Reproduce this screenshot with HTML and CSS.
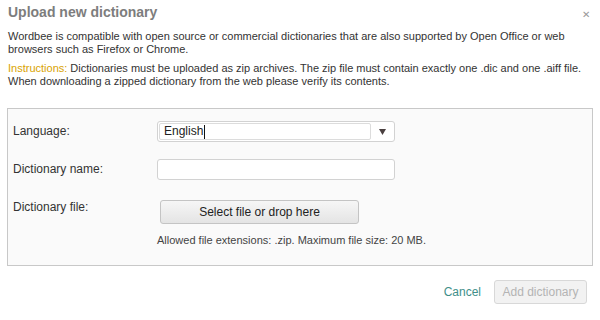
FILE: index.html
```html
<!DOCTYPE html>
<html>
<head>
<meta charset="utf-8">
<link rel="stylesheet" href="styles.css">
</head>
<body>
<div class="dialog">
  <div class="header">
    <h1 class="title">Upload new dictionary</h1>
    <span class="close">&#x2715;</span>
  </div>
  <p class="intro">Wordbee is compatible with open source or commercial dictionaries that are also supported by Open Office or web browsers such as Firefox or Chrome.</p>
  <p class="intro"><span class="hl">Instructions:</span> Dictionaries must be uploaded as zip archives. The zip file must contain exactly one .dic and one .aiff file. When downloading a zipped dictionary from the web please verify its contents.</p>
  <div class="panel">
    <div class="row row-lang">
      <label class="label">Language:</label>
      <div class="select">
        <span class="select-value">English<span class="caret"></span></span>
        <span class="select-arrow"><svg width="7" height="6" viewBox="0 0 7 6"><path d="M0 0H7L3.5 6Z" fill="#4a4040"/></svg></span>
      </div>
    </div>
    <div class="row row-name">
      <label class="label">Dictionary name:</label>
      <div class="input"></div>
    </div>
    <div class="row row-file">
      <label class="label">Dictionary file:</label>
      <div class="file-col">
        <button class="file-btn">Select file or drop here</button>
        <div class="hint">Allowed file extensions: .zip. Maximum file size: 20 MB.</div>
      </div>
    </div>
  </div>
  <div class="footer">
    <a class="cancel">Cancel</a>
    <button class="add-btn">Add dictionary</button>
  </div>
</div>
</body>
</html>
```
FILE: styles.css
```css
html, body {
  margin: 0;
  padding: 0;
  background: #fff;
}
body {
  font-family: "Liberation Sans", Arial, sans-serif;
  font-size: 12px;
  color: #333;
}
.dialog {
  width: 600px;
  height: 320px;
  box-sizing: border-box;
  padding: 0 7px 0 8px;
}
.header {
  display: flex;
  justify-content: space-between;
  align-items: center;
  height: 25px;
}
.title {
  margin: 0;
  font-size: 14px;
  font-weight: bold;
  color: #7d7d7d;
  line-height: 25px;
}
.close {
  font-size: 10px;
  color: #999;
  margin-right: 3px;
  margin-top: 4px;
}
.intro {
  margin: 0;
  font-size: 11px;
  line-height: 13px;
}
.intro:first-of-type {
  margin-top: 5px;
}
.intro + .intro {
  margin-top: 6px;
}
.hl {
  color: #d9a300;
}
.panel {
  margin: 20px 0 0 -1px;
  width: 586px;
  height: 158px;
  box-sizing: border-box;
  border: 1px solid #c8c8c8;
  background: #fafafa;
  padding: 12px 0 0 5px;
}
.row {
  display: flex;
  align-items: flex-start;
}
.label {
  width: 144px;
  color: #333;
  line-height: 20px;
}
.select {
  width: 238px;
  height: 21px;
  box-sizing: border-box;
  border: 1px solid #d2d2d2;
  border-radius: 3px;
  background: #fff;
  display: flex;
  padding: 1px;
}
.select-value {
  flex: 1;
  border: 1px solid #dcdcdc;
  border-radius: 2px;
  font-size: 12px;
  color: #222;
  line-height: 15px;
  padding-left: 4px;
  display: flex;
  align-items: center;
}
.caret {
  display: inline-block;
  width: 1px;
  height: 14px;
  background: #111;
  margin-left: 1px;
}
.select-arrow {
  width: 22px;
  display: flex;
  align-items: center;
  justify-content: center;
}
.row-name {
  margin-top: 17px;
}
.input {
  width: 238px;
  height: 21px;
  box-sizing: border-box;
  border: 1px solid #d2d2d2;
  border-radius: 3px;
  background: #fff;
}
.row-file {
  margin-top: 20px;
}
.row-file .label {
  margin-top: -3px;
}
.file-col {
  display: flex;
  flex-direction: column;
}
.file-btn {
  margin-left: 3px;
  width: 199px;
  height: 24px;
  box-sizing: border-box;
  border: 1px solid #c4c4c4;
  border-radius: 3px;
  background: linear-gradient(#f6f6f6, #e4e4e4);
  font-family: "Liberation Sans", Arial, sans-serif;
  font-size: 12px;
  color: #222;
  padding: 0;
}
.hint {
  margin-top: 10px;
  font-size: 11px;
  color: #444;
}
.footer {
  display: flex;
  justify-content: flex-end;
  align-items: center;
  margin-top: 14px;
  padding-right: 6px;
}
.cancel {
  color: #3f8f8a;
  font-size: 12px;
  margin-right: 13px;
}
.add-btn {
  width: 93px;
  height: 24px;
  box-sizing: border-box;
  border: 1px solid #d8d8d8;
  border-radius: 3px;
  background: #f2f2f2;
  color: #b4b4b4;
  font-family: "Liberation Sans", Arial, sans-serif;
  font-size: 12px;
  padding: 0;
}
```
